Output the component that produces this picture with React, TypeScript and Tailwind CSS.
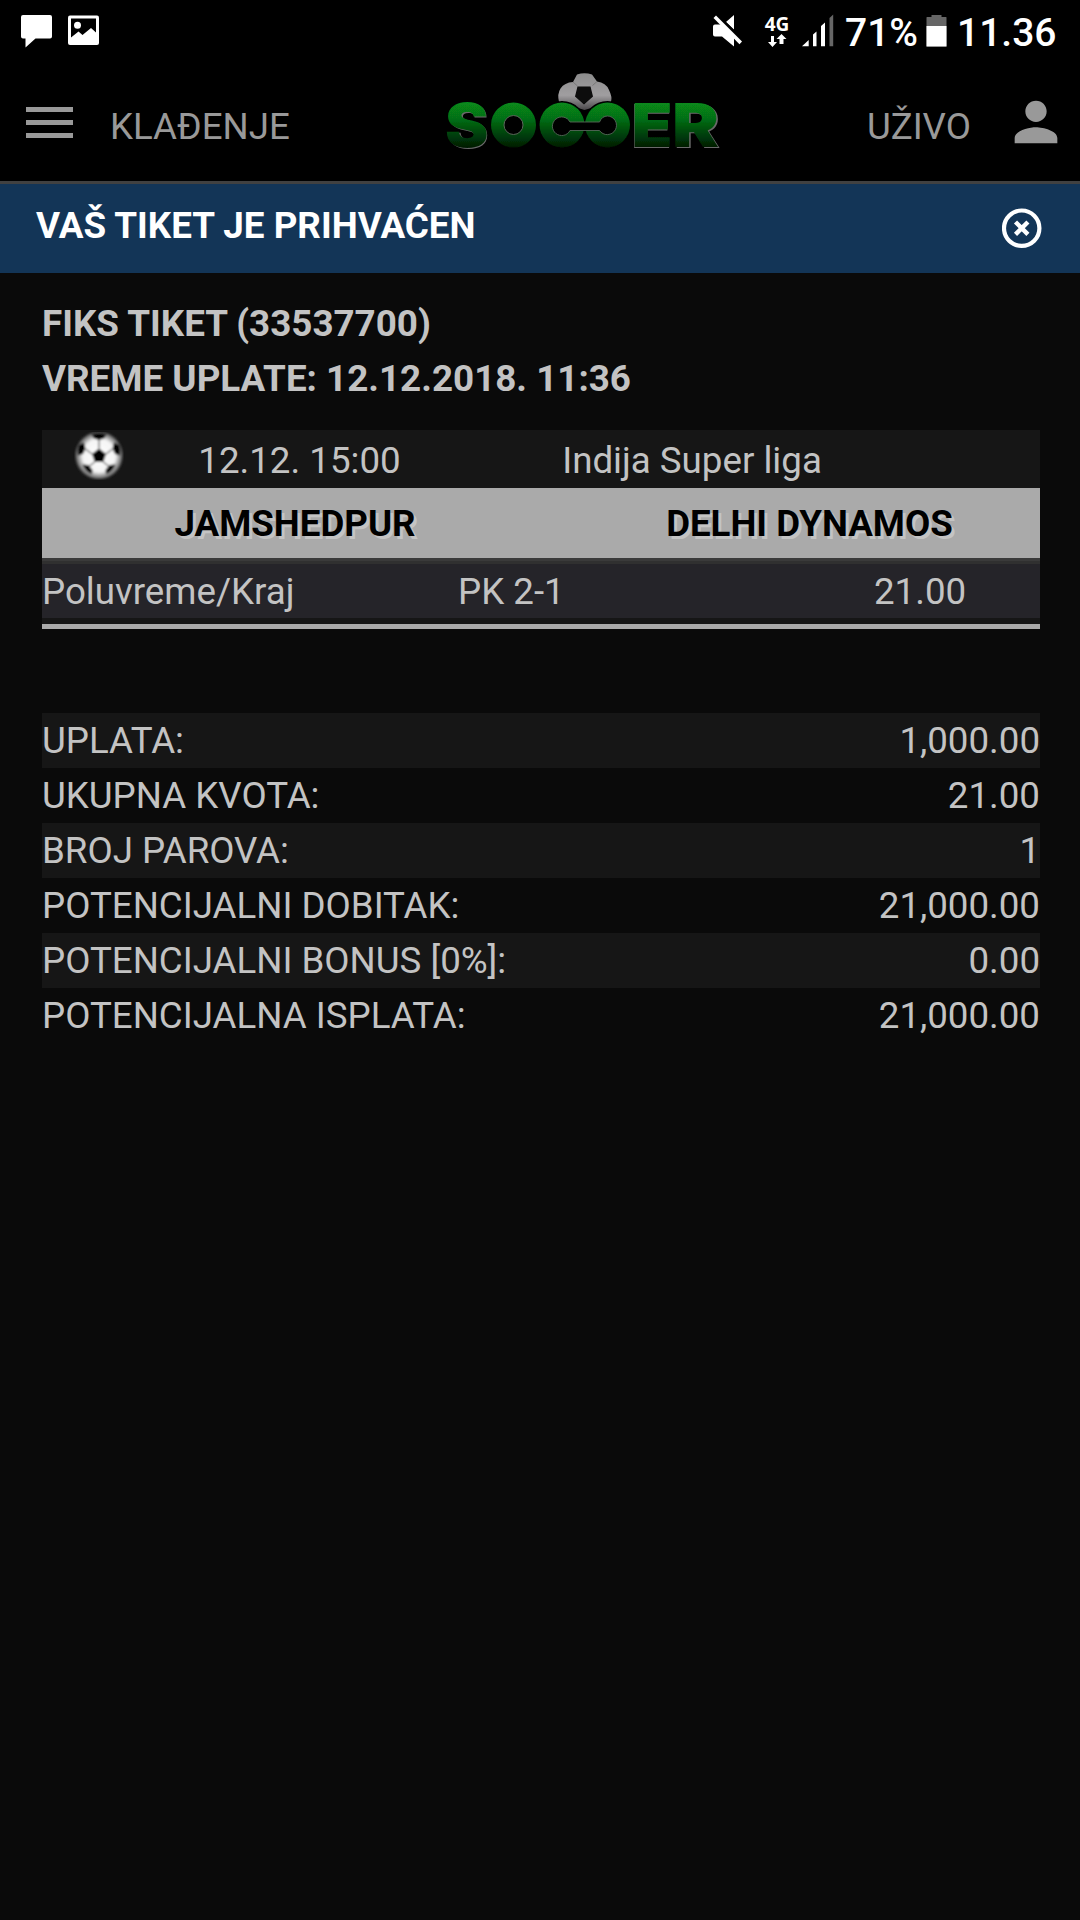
import type { ReactNode } from 'react';
import clsx from 'clsx';

const summary = [
  { label: 'UPLATA:', value: '1,000.00' },
  { label: 'UKUPNA KVOTA:', value: '21.00' },
  { label: 'BROJ PAROVA:', value: '1' },
  { label: 'POTENCIJALNI DOBITAK:', value: '21,000.00' },
  { label: 'POTENCIJALNI BONUS [0%]:', value: '0.00' },
  { label: 'POTENCIJALNA ISPLATA:', value: '21,000.00' },
];

function StatusBar() {
  return (
    <div className="flex h-[72px] justify-between pt-[14px] pr-[23px] pl-[21px] text-white">
      <div className="flex">
        <svg className="h-[34px] w-[31px]" viewBox="0 0 31 34" fill="currentColor">
          <path d="M2 1h27q2 0 2 2v19.500q0 2-2 2H14.500L4.500 33.500V24.500H2q-2 0-2-2V3q0-2 2-2z" />
        </svg>
        <svg className="ml-4 h-[34px] w-[31px]" viewBox="0 0 31 34">
          <rect x="0" y="1.500" width="31" height="29.500" rx="2" fill="#fff" />
          <path d="M3 4.500h25v14L23 14l-8.500 7L10.500 17.500 3 23.500z" fill="#000" />
          <circle cx="9.500" cy="11.300" r="3.500" fill="#fff" />
        </svg>
      </div>

      <div className="flex">
        <svg className="h-[34px] w-[31px]" viewBox="0 0 31 34" fill="currentColor">
          <path d="M22 1v14.500L14 8z" />
          <path d="M3 10.500H9L22 23V32.500L10 22.500H3q-2 0-2-2v-8q0-2 2-2z" />
          <path d="M1.500 4L4 1.500 30 27.500 27.500 30.300z" />
          <path d="M5.500 0L32 26.500" stroke="#000" strokeWidth="1" />
        </svg>
        <div className="ml-[21px] flex w-[26px] flex-col items-center">
          <span className="h-[20px] font-['Noto_Sans'] text-[19px] leading-[20px] font-bold">4G</span>
          <svg className="h-[13px] w-[20px]" viewBox="0 0 20 13" fill="currentColor">
            <path d="M4 2h3v6h3L5.500 13 1 8h3z" />
            <path d="M14.500 0L19.500 5h-3v5h-4V5h-3z" />
          </svg>
        </div>
        <svg className="ml-3 h-[34px] w-[32px]" viewBox="0 0 32 34">
          <path d="M0 32.300L6.700 26v6.300z" fill="#fff" />
          <path d="M11 20.500l3.500-3v14.800H11zM19 12l4-3.500v23.800h-4z" fill="#fff" />
          <path d="M27.500 4l3.700-3.500v31.800h-3.700z" fill="#666" />
        </svg>
        <span className="ml-[11px] w-[73px] text-[39px] leading-[38px] font-medium whitespace-nowrap">71%</span>
        <svg className="ml-[8px] h-[34px] w-[21px]" viewBox="0 0 21 34">
          <path d="M5.500 1h10v2H20q.5 0 .5.500V32.500H.500V3.500Q.500 3 1 3h4.500z" fill="#666" />
          <path d="M.500 12h20v20.500H.500z" fill="#fff" />
        </svg>
        <span className="ml-[10px] w-[100px] pr-px text-right text-[39px] leading-[38px] font-medium whitespace-nowrap">
          11.36
        </span>
      </div>
    </div>
  );
}

function SoccerLogo() {
  return (
    <svg className="h-[84px] w-[280px] overflow-visible" viewBox="440 72 280 84">
      <defs>
        <linearGradient id="grass" gradientUnits="userSpaceOnUse" x1="0" y1="102" x2="0" y2="149">
          <stop offset="0" stopColor="#078a1b" />
          <stop offset="0.350" stopColor="#067014" />
          <stop offset="0.700" stopColor="#033f0a" />
          <stop offset="1" stopColor="#011803" />
        </linearGradient>
        <linearGradient id="leather" x1="0" y1="0" x2="0" y2="1">
          <stop offset="0" stopColor="#8c8c8c" />
          <stop offset="0.600" stopColor="#a09ea0" />
          <stop offset="1" stopColor="#4a474a" />
        </linearGradient>
        <filter id="logoSoft">
          <feGaussianBlur stdDeviation="0.700" />
        </filter>
      </defs>

      <g filter="url(#logoSoft)">
        {/* ball behind the two rings */}
        <path
          d="M577 74.500Q584.500 72 592 74.500L597 81.500Q606 82.500 609 90Q612.500 97 611 102L584.500 110L559 102Q557 94 560.500 88.500Q564.500 82.500 573 82z"
          fill="url(#leather)"
        />
        <path d="M573 82l4.500 4M597 81.500l-4.500 4" stroke="#777" strokeWidth="1" />
        <path d="M577.500 86.500h13l2.500 10-9 8-9-8z" fill="#080808" />

        <g fontFamily="Inter" fontWeight="900" fontSize="61" fill="#6a6a6a">
          <text x="447" y="147.500" textLength="42" lengthAdjust="spacingAndGlyphs">S</text>
          <text x="631" y="147.500" textLength="41" lengthAdjust="spacingAndGlyphs">E</text>
          <text x="673.500" y="147.500" textLength="47" lengthAdjust="spacingAndGlyphs">R</text>
        </g>
        <g fontFamily="Inter" fontWeight="900" fontSize="61" fill="url(#grass)">
          <text x="445" y="147" textLength="43.500" lengthAdjust="spacingAndGlyphs">S</text>
          <text x="631.500" y="147" textLength="41" lengthAdjust="spacingAndGlyphs">E</text>
          <text x="672" y="147" textLength="47" lengthAdjust="spacingAndGlyphs">R</text>
        </g>

        {/* O and the joined C rings */}
        <circle cx="513.500" cy="125" r="16" fill="none" stroke="url(#grass)" strokeWidth="13" />
        <circle cx="513.500" cy="125" r="9.500" fill="none" stroke="#5a665a" strokeWidth="1" />
        <circle cx="562" cy="125" r="24" fill="#000" />
        <circle cx="607.500" cy="125" r="24" fill="#000" />
        <circle cx="562" cy="125" r="22.500" fill="url(#grass)" />
        <circle cx="607.500" cy="125" r="22.500" fill="url(#grass)" />
        <path
          d="M570 122h29.500Q602 116 607.500 116a9.300 9.300 0 1 1-8 14.500H570a9.300 9.300 0 1 1 0-8.500z"
          fill="#000"
          stroke="#55665a"
          strokeWidth="0.900"
        />
      </g>
    </svg>
  );
}

function Header() {
  return (
    <header className="flex h-[112px] items-start border-b-[3px] border-[#414141] text-[#999]">
      <div className="mt-[35px] ml-[26px] flex w-[47px] flex-col gap-2">
        <div className="h-[5px] bg-[#999]" />
        <div className="h-[5px] bg-[#999]" />
        <div className="h-[5px] bg-[#999]" />
      </div>
      <span className="mt-[27px] ml-[37px] w-[330px] leading-[55px]">KLAĐENJE</span>
      <SoccerLogo />
      <span className="mt-[27px] ml-auto leading-[55px]">UŽIVO</span>
      <svg className="mt-[18px] mr-3 ml-[33px] size-16" viewBox="0 0 24 24" fill="currentColor">
        <path d="M12 12c2.210 0 4-1.790 4-4s-1.790-4-4-4-4 1.790-4 4 1.790 4 4 4zm0 2c-2.670 0-8 1.340-8 4v2h16v-2c0-2.660-5.330-4-8-4z" />
      </svg>
    </header>
  );
}

function Banner({ children }: { children: ReactNode }) {
  return (
    <div className="flex h-[89px] items-start justify-between bg-[#133557] pt-[14px] pr-[38px] pl-[36px] text-white">
      <h1 className="text-[36.8px] leading-[55px] font-bold">{children}</h1>
      <svg className="mt-[10px] size-10" viewBox="0 0 40 40" fill="none" stroke="currentColor">
        <circle cx="19.700" cy="20.200" r="17.700" strokeWidth="4.200" />
        <path d="M13.500 14l12.400 12.400M25.900 14L13.500 26.400" strokeWidth="4.400" />
      </svg>
    </div>
  );
}

function SoccerBall() {
  return (
    <svg className="-mt-px -ml-[2px] h-[48px] w-[50px]" viewBox="0 0 50 48">
      <defs>
        <radialGradient id="ball" cx="0.500" cy="0.500" r="0.500">
          <stop offset="0" stopColor="#fff" />
          <stop offset="0.680" stopColor="#f4f4f4" />
          <stop offset="0.880" stopColor="#8a8a8a" />
          <stop offset="1" stopColor="#3a3a3a" />
        </radialGradient>
        <filter id="soft">
          <feGaussianBlur stdDeviation="0.900" />
        </filter>
      </defs>
      <g filter="url(#soft)">
        <circle cx="25" cy="23.500" r="24" fill="url(#ball)" />
        <path d="M25 16.500l7 5.500-2.700 8h-8.600L18 22z" fill="#000" />
        <path d="M17.500 2.500Q25 0 32.500 2.500L30 6.500 25 8l-5-1.500z" fill="#000" />
        <path d="M5 13l5-2.500 1.500 6L9 22l-5 1.500Q3 18 5 13z" fill="#000" />
        <path d="M45 13l-5-2.500-1.500 6L41 22l5 1.500Q47 18 45 13z" fill="#000" />
        <path d="M8.500 32.500l6 .5 4 5-.5 4Q11.500 40 8.500 32.500z" fill="#000" />
        <path d="M41.500 32.500l-6 .5-4 5 .5 4Q38.500 40 41.500 32.500z" fill="#000" />
        <path
          d="M25 8v8.500M11.500 17L18 22M38.500 17L32 22M20.700 30L15.500 34M29.300 30l5.200 4"
          stroke="#777"
          strokeWidth="1.500"
        />
      </g>
    </svg>
  );
}

function MatchCard() {
  return (
    <section className="mt-6 border-b-[5px] border-[#aaa]">
      <div className="flex h-[58px] bg-[#161616] pt-[3px] leading-[55px]">
        <div className="flex w-[115px] justify-center">
          <SoccerBall />
        </div>
        <span className="w-[285px] text-center">12.12. 15:00</span>
        <span className="w-[500px] text-center">Indija Super liga</span>
      </div>
      <div className="flex h-[70px] bg-[#aaa] pt-px text-center leading-[70px] font-bold text-black [text-shadow:3px_3px_0_#c4c4c4]">
        <span className="w-[506px]">JAMSHEDPUR</span>
        <span className="w-[492px] pl-[31px]">DELHI DYNAMOS</span>
      </div>
      <div className="h-[3px] bg-[#3a3a3a]" />
      <div className="h-[3px] bg-[#303030]" />
      <div className="flex h-[54px] bg-[#252429] leading-[55px]">
        <span className="w-[416px]">Poluvreme/Kraj</span>
        <span className="w-[416px]">PK 2-1</span>
        <span>21.00</span>
      </div>
      <div className="h-[6px] bg-[#161616]" />
    </section>
  );
}

export default function App() {
  return (
    <main className="h-[1920px] w-[1080px] overflow-hidden bg-[#0a0a0a] font-[Roboto,sans-serif] text-[36.7px] text-[#c3c3c3]">
      <div className="bg-black">
        <StatusBar />
        <Header />
      </div>
      <Banner>VAŠ TIKET JE PRIHVAĆEN</Banner>

      <div className="pt-[23px] pr-10 pl-[42px]">
        <div className="text-[36.8px] leading-[55px] font-bold">
          <p>FIKS TIKET (33537700)</p>
          <p>VREME UPLATE: 12.12.2018. 11:36</p>
        </div>

        <MatchCard />

        <dl className="mt-[84px]">
          {summary.map((row, i) => (
            <div
              key={row.label}
              className={clsx('flex h-[55px] justify-between leading-[55px]', i % 2 === 0 && 'bg-[#161616]')}
            >
              <dt>{row.label}</dt>
              <dd>{row.value}</dd>
            </div>
          ))}
        </dl>
      </div>
    </main>
  );
}
